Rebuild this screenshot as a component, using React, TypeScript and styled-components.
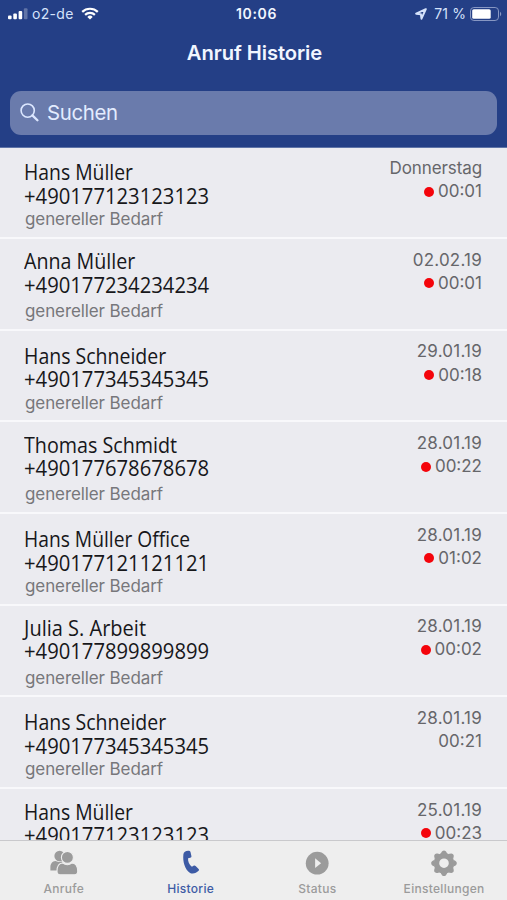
import React from "react";
import styled, { createGlobalStyle } from "styled-components";

const GlobalStyle = createGlobalStyle`
  * { box-sizing: border-box; }
  body { margin: 0; background: #ebebf0; font-family: Inter, "Liberation Sans", sans-serif; }
`;

const Screen = styled.main`
  width: 507px;
  height: 900px;
  display: flex;
  flex-direction: column;
  overflow: hidden;
  background: #ebebf0;
`;

const Header = styled.header`
  flex: none;
  height: 148px;
  background: #243f86;
  color: #f1f6ff;
  border-bottom: 1px solid #5f74a8;
`;

const StatusBar = styled.div`
  display: grid;
  grid-template-columns: 1fr auto 1fr;
  align-items: center;
  height: 27px;
  padding: 0 5px 0 8px;
  font-size: 14px;
  line-height: 27px;
`;

const StatusGroup = styled.div<{ $end?: boolean }>`
  display: flex;
  align-items: center;
  justify-content: ${(p) => (p.$end ? "flex-end" : "flex-start")};
  color: #d5e2fb;
`;

const Carrier = styled.span`
  margin: 0 7px 0 4px;
  letter-spacing: 0.3px;
`;

const Clock = styled.time`
  font-weight: 600;
  letter-spacing: 0.65px;
  padding-left: 3px;
`;

const Percent = styled.span`
  margin: 0 4px 0 7px;
  letter-spacing: 0.1px;
`;

const Title = styled.h1`
  margin: 0;
  height: 64px;
  padding: 12px 0 0 2px;
  text-align: center;
  font-size: 20.2px;
  line-height: 28px;
  letter-spacing: -0.08px;
  font-weight: 600;
`;

const SearchField = styled.div`
  display: flex;
  align-items: center;
  gap: 8px;
  height: 44px;
  margin: 0 10px;
  padding: 0 0 1px 10px;
  border-radius: 11px;
  background: #6a7bac;
  color: #e3ecff;
  font-size: 20.4px;
  letter-spacing: -0.35px;
`;

const CallList = styled.ul`
  flex: 1;
  min-height: 0;
  margin: 0;
  padding: 0;
  list-style: none;
  overflow: hidden;
`;

const CallRow = styled.li<{ $first?: boolean }>`
  display: flex;
  justify-content: space-between;
  height: ${(p) => (p.$first ? 91.1 : 91.65)}px;
  padding: ${(p) => (p.$first ? 9 : 9.6)}px 25px 0 24px;
  border-bottom: 2px solid #f8f8fb;
`;

const Contact = styled.div<{ $shift: number }>`
  height: 50.4px;
  padding-top: ${(p) => p.$shift}px;
  font-family: "Open Sans", "Noto Sans", sans-serif;
  font-size: 21.5px;
  line-height: 23.3px;
  color: #17171a;
  white-space: nowrap;
`;

const Name = styled.div<{ $condense: number }>`
  width: max-content;
  transform: scaleX(${(p) => p.$condense});
  transform-origin: left center;
`;

const Need = styled.div`
  padding-left: 1px;
  font-size: 17px;
  line-height: 24px;
  letter-spacing: -0.1px;
  color: #77777b;
`;

const Meta = styled.div`
  display: flex;
  flex-direction: column;
  align-items: flex-end;
  font-size: 17px;
  line-height: 23.2px;
  color: #66666a;
`;

const Day = styled.span<{ $numeric: boolean }>`
  letter-spacing: ${(p) => (p.$numeric ? 0.22 : -0.1)}px;
`;

const Duration = styled.span`
  display: flex;
  align-items: center;
  gap: 3px;
`;

const RecordDot = styled.i`
  width: 10px;
  height: 10px;
  margin-right: 1px;
  border-radius: 50%;
  background: #f4040b;
`;

const TabBar = styled.nav`
  flex: none;
  display: grid;
  grid-template-columns: repeat(4, 1fr);
  height: 60px;
  border-top: 1px solid #c9c9cc;
  background: #eeeeee;
`;

const Tab = styled.a<{ $active?: boolean }>`
  display: flex;
  flex-direction: column;
  align-items: center;
  padding: 9px 0 0 1px;
  color: ${(p) => (p.$active ? "#3d5ba5" : "#9b9b9b")};
  font-size: 12px;
  line-height: 16px;
  font-weight: 500;
  letter-spacing: 0.3px;

  svg { display: block; margin-bottom: 6px; }
`;

const SignalIcon = () => (
  <svg width="20" height="12" viewBox="0 0 20 12" fill="#fff">
    <rect x="0" y="7.5" width="3.6" height="3.8" rx="1" />
    <rect x="5.3" y="5.4" width="3.6" height="5.9" rx="1" />
    <rect x="10.6" y="3" width="3.6" height="8.3" rx="1" />
    <rect x="15.9" y="0.3" width="3.6" height="11" rx="1" opacity="0.28" />
  </svg>
);

const WifiIcon = () => (
  <svg width="18" height="13" viewBox="0 0 18 13" fill="none" stroke="#fff" strokeWidth="2.2">
    <path d="M1.2 4.9a11.2 11.2 0 0 1 15.6 0" />
    <path d="M4.1 7.9a7.1 7.1 0 0 1 9.8 0" />
    <path d="M9 12.6 6.3 9.9a3.9 3.9 0 0 1 5.4 0z" fill="#fff" stroke="none" />
  </svg>
);

const LocationIcon = () => (
  <svg width="12" height="12" viewBox="0 0 12 12" fill="none" stroke="#d5e2fb" strokeWidth="2" strokeLinejoin="round">
    <path d="M10.8 1.2 1.2 5.7l4.7.6.6 4.4z" />
  </svg>
);

const BatteryIcon = () => (
  <svg width="32" height="14" viewBox="0 0 32 14">
    <rect x="0.5" y="0.5" width="28" height="13" rx="3.4" fill="none" stroke="#8797c3" />
    <rect x="2.2" y="2.2" width="18.5" height="9.6" rx="1.6" fill="#fff" />
    <path d="M30 4.8c1.7.7 1.7 3.7 0 4.4z" fill="#8797c3" />
  </svg>
);

const SearchIcon = () => (
  <svg width="19" height="19" viewBox="0 0 19 19" fill="none" stroke="#dce7ff">
    <circle cx="7.7" cy="7.6" r="6.6" strokeWidth="1.6" />
    <path d="m12.4 12.4 5 4.9" strokeWidth="2.3" strokeLinecap="round" />
  </svg>
);

const PeopleIcon = () => (
  <svg width="28" height="25" viewBox="0 0 28 25" fill="currentColor">
    <circle cx="9.6" cy="6" r="5.2" />
    <path d="M.4 20.4v-3.3c0-3.7 2.2-6.1 5-6.2l3.1 1.2 3.8-.6v8.9z" />
    <g stroke="#eeeeee" strokeWidth="1.1">
      <circle cx="17.4" cy="7.4" r="6" />
      <path d="M7 21.3c0-5.2 2.5-8.2 5.9-8.3 2.6 2.2 6.3 2.2 8.8 0 3.5.1 6 3.1 6 8.3 0 2.3-1.2 3.4-3 3.4H10c-1.9 0-3-1.1-3-3.4z" />
    </g>
  </svg>
);

const PhoneIcon = () => (
  <svg width="28" height="25" viewBox="0 0 28 25" fill="currentColor">
    <path d="M6.4 4.2C6.7 1.8 9.1.4 12.1.8c.8.1 1.3.5 1.4 1.2l.9 4.1c.2 1-.3 1.6-1.2 1.7l-2.1.4c-.4 3.1 1 6.3 3.8 8.6l1.6-1.1c.8-.5 1.5-.4 2.1.2l3 3.1c.6.6.6 1.2 0 1.8-2 2.2-5.9 3.7-8.5 2.1C7.9 19.8 5.5 11.3 6.4 4.2z" />
  </svg>
);

const PlayIcon = () => (
  <svg width="28" height="25" viewBox="0 0 28 25">
    <circle cx="14.2" cy="13.2" r="11.4" fill="currentColor" />
    <path d="m12.1 8.3 6 4.9-6 4.9z" fill="#eeeeee" />
  </svg>
);

const GearIcon = () => (
  <svg width="28" height="25" viewBox="0 0 28 25" overflow="visible">
    <g transform="translate(14 13.2)" fill="currentColor">
      <circle r="7.5" fill="none" stroke="currentColor" strokeWidth="5.4" />
      {[0, 45, 90, 135, 180, 225, 270, 315].map((a) => (
        <path key={a} d="M-3.9-9.2c1.2-.7 1.5-3.6 3.9-3.6s2.7 2.9 3.9 3.6z" transform={`rotate(${a})`} />
      ))}
    </g>
  </svg>
);

interface Call {
  name: string;
  phone: string;
  day: string;
  duration: string;
  recorded: boolean;
  condense: number;
  shift: number;
}

const PHONE_CONDENSE = 0.941;

const calls: Call[] = [
  { name: "Hans Müller", phone: "+490177123123123", day: "Donnerstag", duration: "00:01", recorded: true, condense: 0.9, shift: 3.4 },
  { name: "Anna Müller", phone: "+490177234234234", day: "02.02.19", duration: "00:01", recorded: true, condense: 0.914, shift: 0.8 },
  { name: "Hans Schneider", phone: "+490177345345345", day: "29.01.19", duration: "00:18", recorded: true, condense: 0.907, shift: 3.6 },
  { name: "Thomas Schmidt", phone: "+490177678678678", day: "28.01.19", duration: "00:22", recorded: true, condense: 0.916, shift: 0.8 },
  { name: "Hans Müller Office", phone: "+490177121121121", day: "28.01.19", duration: "01:02", recorded: true, condense: 0.895, shift: 3.6 },
  { name: "Julia S. Arbeit", phone: "+490177899899899", day: "28.01.19", duration: "00:02", recorded: true, condense: 0.931, shift: 0.8 },
  { name: "Hans Schneider", phone: "+490177345345345", day: "28.01.19", duration: "00:21", recorded: false, condense: 0.907, shift: 3.6 },
  { name: "Hans Müller", phone: "+490177123123123", day: "25.01.19", duration: "00:23", recorded: true, condense: 0.9, shift: 1.4 },
];

export default function App() {
  return (
    <Screen>
      <GlobalStyle />
      <Header>
        <StatusBar>
          <StatusGroup>
            <SignalIcon />
            <Carrier>o2-de</Carrier>
            <WifiIcon />
          </StatusGroup>
          <Clock>10:06</Clock>
          <StatusGroup $end>
            <LocationIcon />
            <Percent>71 %</Percent>
            <BatteryIcon />
          </StatusGroup>
        </StatusBar>
        <Title>Anruf Historie</Title>
        <SearchField>
          <SearchIcon />
          <span>Suchen</span>
        </SearchField>
      </Header>
      <CallList>
        {calls.map((call, i) => (
          <CallRow key={i} $first={i === 0}>
            <div>
              <Contact $shift={call.shift}>
                <Name $condense={call.condense}>{call.name}</Name>
                <Name $condense={PHONE_CONDENSE}>{call.phone}</Name>
              </Contact>
              <Need>genereller Bedarf</Need>
            </div>
            <Meta>
              <Day $numeric={i > 0}>{call.day}</Day>
              <Duration>
                {call.recorded && <RecordDot />}
                {call.duration}
              </Duration>
            </Meta>
          </CallRow>
        ))}
      </CallList>
      <TabBar>
        <Tab><PeopleIcon />Anrufe</Tab>
        <Tab $active><PhoneIcon />Historie</Tab>
        <Tab><PlayIcon />Status</Tab>
        <Tab><GearIcon />Einstellungen</Tab>
      </TabBar>
    </Screen>
  );
}
